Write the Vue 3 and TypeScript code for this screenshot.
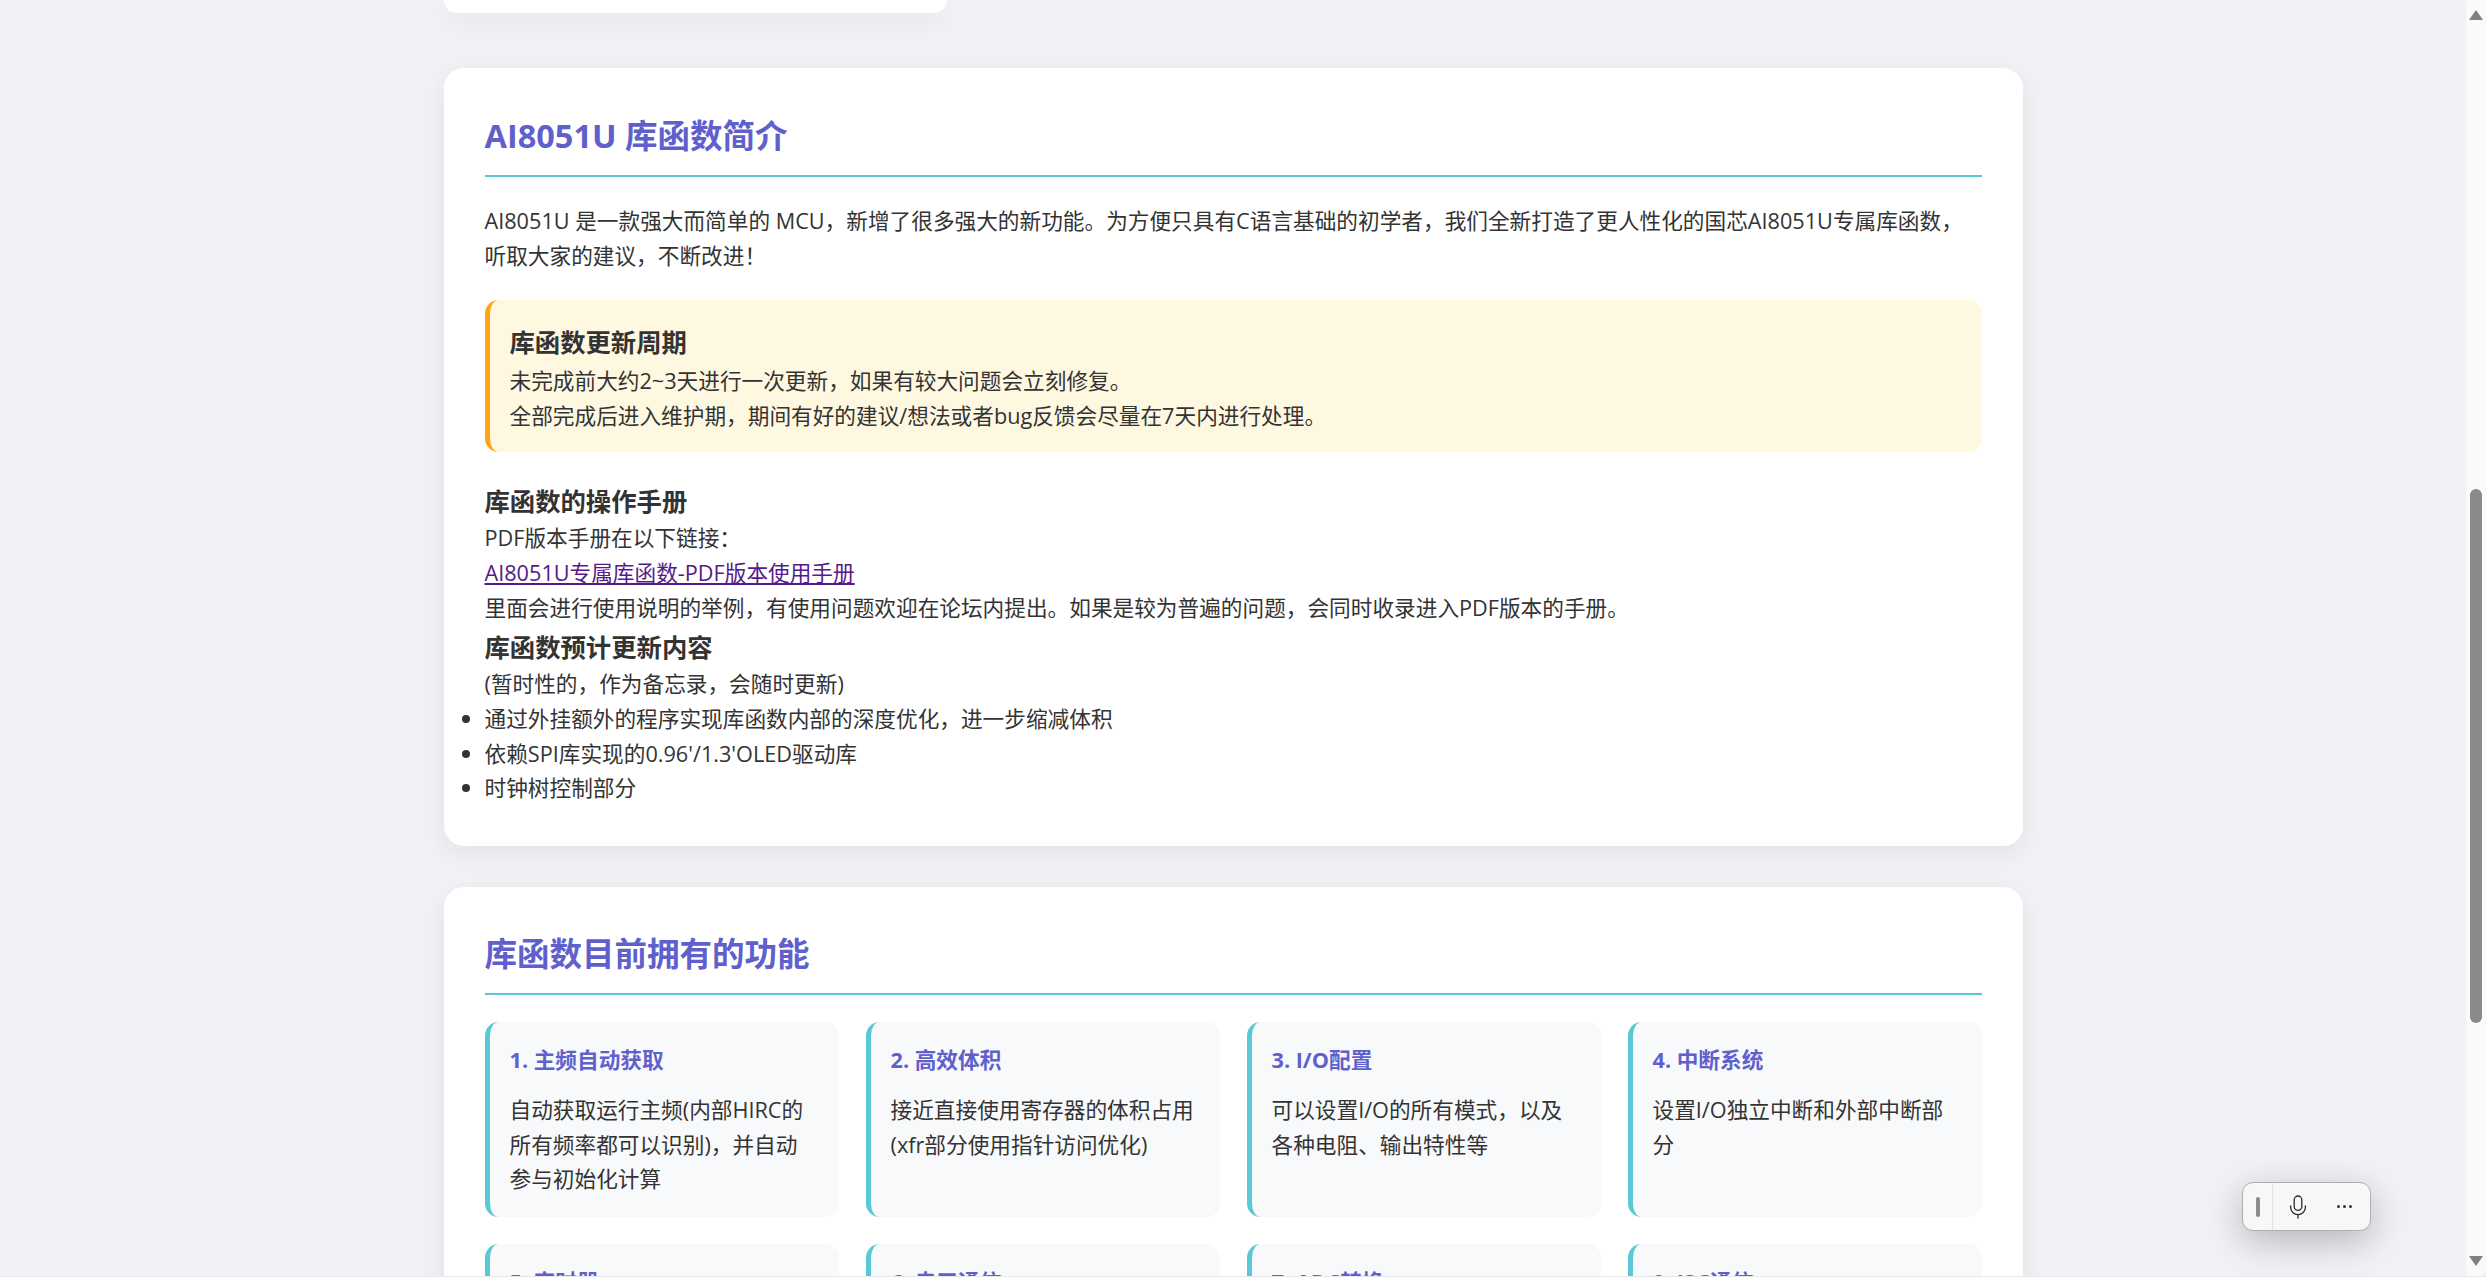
<template>
  <div class="page" lang="zh-CN">
    <main class="content">
      <div class="stub"></div>

      <section class="card intro-card">
        <h2 class="h2">AI8051U 库函数简介</h2>
        <p class="intro">AI8051U 是一款强大而简单的 MCU，新增了很多强大的新功能。为方便只具有C语言基础的初学者，我们全新打造了更人性化的国芯AI8051U专属库函数，听取大家的建议，不断改进！</p>

        <div class="note">
          <h3 class="note-title">库函数更新周期</h3>
          <div>未完成前大约2~3天进行一次更新，如果有较大问题会立刻修复。</div>
          <div>全部完成后进入维护期，期间有好的建议/想法或者bug反馈会尽量在7天内进行处理。</div>
        </div>

        <h3 class="h3">库函数的操作手册</h3>
        <div>PDF版本手册在以下链接：</div>
        <div><a class="link" href="#">AI8051U专属库函数-PDF版本使用手册</a></div>
        <div>里面会进行使用说明的举例，有使用问题欢迎在论坛内提出。如果是较为普遍的问题，会同时收录进入PDF版本的手册。</div>

        <h3 class="h3 next">库函数预计更新内容</h3>
        <div>(暂时性的，作为备忘录，会随时更新)</div>
        <ul class="list">
          <li v-for="item in plans" :key="item">{{ item }}</li>
        </ul>
      </section>

      <section class="card">
        <h2 class="h2">库函数目前拥有的功能</h2>
        <div class="features">
          <div v-for="f in features" :key="f.title" class="feature">
            <h4 class="feature-title">{{ f.title }}</h4>
            <p class="feature-desc">{{ f.desc }}</p>
          </div>
        </div>
      </section>
    </main>

    <!-- browser scrollbar -->
    <div class="scrollbar">
      <svg class="arrow arrow-up" width="14" height="10" viewBox="0 0 14 10"><path d="M7 0 14 10H0Z" fill="#808080" /></svg>
      <div class="thumb"></div>
      <svg class="arrow arrow-down" width="14" height="10" viewBox="0 0 14 10"><path d="M0 0H14L7 10Z" fill="#808080" /></svg>
    </div>

    <!-- floating voice toolbar -->
    <div class="voice-bar">
      <div class="grip"><span></span></div>
      <svg class="mic" width="18" height="24" viewBox="0 0 18 24" fill="none" stroke="#2b2b2b" stroke-width="1.3" stroke-linecap="round">
        <rect x="5.2" y="1" width="7.6" height="14.4" rx="3.8" />
        <path d="M1.6 10.8v1.4a7.4 7.4 0 0 0 14.8 0v-1.4" />
        <path d="M9 19.6V23" />
      </svg>
      <div class="dots"><i></i><i></i><i></i></div>
    </div>
  </div>
</template>

<script setup lang="ts">
const plans = [
  "通过外挂额外的程序实现库函数内部的深度优化，进一步缩减体积",
  "依赖SPI库实现的0.96'/1.3'OLED驱动库",
  "时钟树控制部分",
];

const features = [
  { title: "1. 主频自动获取", desc: "自动获取运行主频(内部HIRC的所有频率都可以识别)，并自动参与初始化计算" },
  { title: "2. 高效体积", desc: "接近直接使用寄存器的体积占用(xfr部分使用指针访问优化)" },
  { title: "3. I/O配置", desc: "可以设置I/O的所有模式，以及各种电阻、输出特性等" },
  { title: "4. 中断系统", desc: "设置I/O独立中断和外部中断部分" },
  { title: "5. 定时器", desc: "" },
  { title: "6. 串口通信", desc: "" },
  { title: "7. ADC转换", desc: "" },
  { title: "8. I2C通信", desc: "" },
];
</script>

<style>
html, body { margin: 0; overflow: hidden; }
</style>

<style scoped>
.page {
  position: relative;
  width: 2486px;
  height: 1277px;
  overflow: hidden;
  background: #f0f2f5;
  color: #333;
  font-family: "Open Sans", "Noto Sans CJK SC", sans-serif;
  font-size: 21.67px;
  line-height: 34.67px;
}
/* thin window edge along the bottom */
.page::after { content: ""; position: absolute; left: 0; right: 0; bottom: 0; height: 1px; background: #e6e6e8; }
.content { width: 2466px; display: flex; flex-direction: column; align-items: center; }
.stub {
  width: 503px; height: 13px; margin-right: 1076px; margin-bottom: 55px;
  background: #fff; border-radius: 0 0 20px 20px;
  box-shadow: 0 7px 27px rgba(0,0,0,.07);
}
.card {
  width: 1579px; box-sizing: border-box; margin-bottom: 41px; padding: 41px;
  background: #fff; border-radius: 20px;
  box-shadow: 0 7px 27px rgba(0,0,0,.07);
}
.intro-card { padding-bottom: 40px; }
.h2 {
  margin: 0 0 27px; padding-bottom: 13px;
  border-bottom: 2.7px solid #5bc8d8;
  color: #6060cc; font-size: 32.5px; line-height: 52px; font-weight: 700;
}
.intro-card .h2 { padding-top: 1px; }
.intro { margin: 0 0 27px; }
.note {
  margin-bottom: 29px; padding: 21px 20px 18px;
  background: #fff8e1; border-left: 5.4px solid #ffa412; border-radius: 13.5px;
}
.note-title { margin: 0; font-size: 25.35px; line-height: 43px; font-weight: 700; }
.h3 { margin: 0; font-size: 25.35px; line-height: 40.6px; font-weight: 700; }
.h3.next { margin-top: 1.5px; }
.link { color: #551a8b; text-decoration: underline; }
.list { margin: 0; padding: 0; list-style: none; }
.list li { position: relative; }
.list li::before {
  content: ""; position: absolute; left: -23px; top: 13px;
  width: 8px; height: 8px; border-radius: 50%; background: #333;
}
.features { display: grid; grid-template-columns: repeat(4, 1fr); gap: 27px; }
.feature {
  box-sizing: border-box; min-height: 194px; padding: 20px;
  background: #f8f9fa; border-left: 5.4px solid #5bc8d8; border-radius: 13.5px;
}
.feature-title { margin: 0 0 15px; color: #6060cc; font-size: 21.67px; line-height: 36px; font-weight: 700; }
.feature-desc { margin: 0; }

.scrollbar { position: absolute; top: 0; right: 0; width: 20px; height: 1277px; background: #fafafa; border-bottom-right-radius: 10px; }
.arrow { position: absolute; left: 3px; }
.arrow-up { top: 10px; }
.arrow-down { bottom: 11px; }
.thumb { position: absolute; left: 4px; top: 489px; width: 12px; height: 534px; background: #8a8a8a; border-radius: 6px; }

.voice-bar {
  position: absolute; left: 2242px; top: 1182px;
  display: flex; align-items: center;
  width: 129px; height: 49px; box-sizing: border-box;
  background: #f7f7f8; border: 1px solid #b0b0b0; border-radius: 11px;
  box-shadow: 0 10px 36px rgba(0,0,0,.26);
}
.grip { width: 29px; height: 100%; display: flex; align-items: center; justify-content: center; border-right: 1px solid #e3e3e3; }
.grip span { width: 4px; height: 20px; background: #8c8c8c; border-radius: 2px; }
.mic { margin-left: 16px; }
.dots { display: flex; gap: 2.6px; margin-left: 30px; }
.dots i { width: 3.4px; height: 3.4px; border-radius: 50%; background: #333; }
</style>
